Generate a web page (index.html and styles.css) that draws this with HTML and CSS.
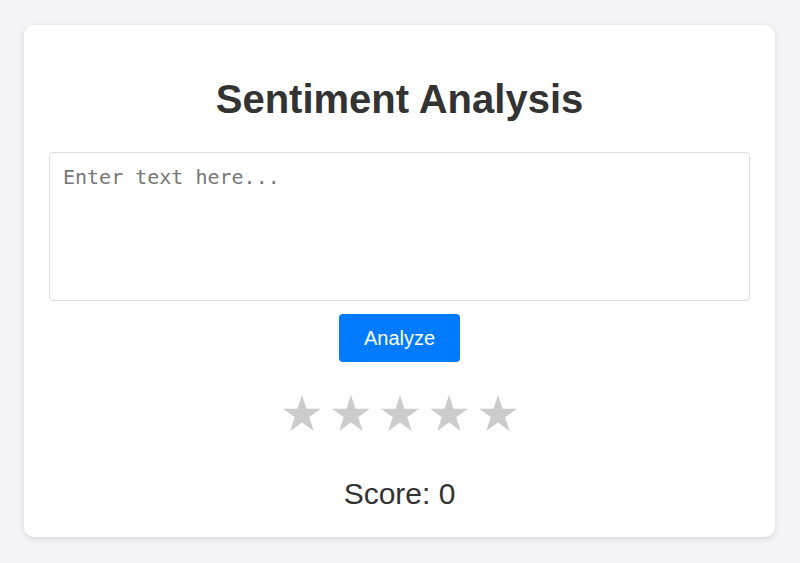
FILE: index.html
```html
<!DOCTYPE html>
<html>
<head>
<meta charset="utf-8">
<link rel="stylesheet" href="styles.css">
</head>
<body>
<div class="card">
  <h1 class="title">Sentiment Analysis</h1>
  <textarea class="input" placeholder="Enter text here..."></textarea>
  <button class="btn">Analyze</button>
  <div class="stars">
    <svg class="star" viewBox="2.45 0 95.1 90.45"><polygon points="50,0 61.23,34.55 97.55,34.55 68.17,55.9 79.39,90.45 50,69.1 20.61,90.45 31.83,55.9 2.45,34.55 38.77,34.55"/></svg>
    <svg class="star" viewBox="2.45 0 95.1 90.45"><polygon points="50,0 61.23,34.55 97.55,34.55 68.17,55.9 79.39,90.45 50,69.1 20.61,90.45 31.83,55.9 2.45,34.55 38.77,34.55"/></svg>
    <svg class="star" viewBox="2.45 0 95.1 90.45"><polygon points="50,0 61.23,34.55 97.55,34.55 68.17,55.9 79.39,90.45 50,69.1 20.61,90.45 31.83,55.9 2.45,34.55 38.77,34.55"/></svg>
    <svg class="star" viewBox="2.45 0 95.1 90.45"><polygon points="50,0 61.23,34.55 97.55,34.55 68.17,55.9 79.39,90.45 50,69.1 20.61,90.45 31.83,55.9 2.45,34.55 38.77,34.55"/></svg>
    <svg class="star" viewBox="2.45 0 95.1 90.45"><polygon points="50,0 61.23,34.55 97.55,34.55 68.17,55.9 79.39,90.45 50,69.1 20.61,90.45 31.83,55.9 2.45,34.55 38.77,34.55"/></svg>
  </div>
  <div class="score">Score: 0</div>
</div>
</body>
</html>
```
FILE: styles.css
```css
html, body {
  margin: 0;
  padding: 0;
}
body {
  background: #f4f4f8;
  font-family: "Liberation Sans", Arial, sans-serif;
  padding: 25px 25px 0 24px;
  height: 563px;
  box-sizing: border-box;
}
.card {
  background: #fff;
  border-radius: 10px;
  box-shadow: 0 2px 6px rgba(0,0,0,0.12);
  padding: 25px;
  height: 512px;
  box-sizing: border-box;
  display: flex;
  flex-direction: column;
  align-items: center;
}
.card > * {
  flex-shrink: 0;
}
.title {
  margin: 26px 0 0;
  font-size: 40px;
  line-height: 46px;
  color: #333;
  font-weight: bold;
}
.input {
  margin-top: 30px;
  width: 100%;
  height: 149px;
  box-sizing: border-box;
  border: 1px solid #ddd;
  border-radius: 4px;
  padding: 12px 13px;
  font-family: "DejaVu Sans Mono", monospace;
  font-size: 20px;
  resize: none;
}
.input::placeholder {
  color: #777;
}
.btn {
  margin-top: 13px;
  width: 121px;
  height: 48px;
  background: #007bff;
  color: #fff;
  border: none;
  border-radius: 4px;
  font-family: "Liberation Sans", Arial, sans-serif;
  font-size: 20px;
}
.stars {
  margin-top: 33px;
  display: flex;
  gap: 11px;
}
.star {
  display: block;
  width: 38px;
  height: 36px;
  fill: #ccc;
}
.score {
  margin-top: 46px;
  font-size: 30px;
  color: #333;
}
```
